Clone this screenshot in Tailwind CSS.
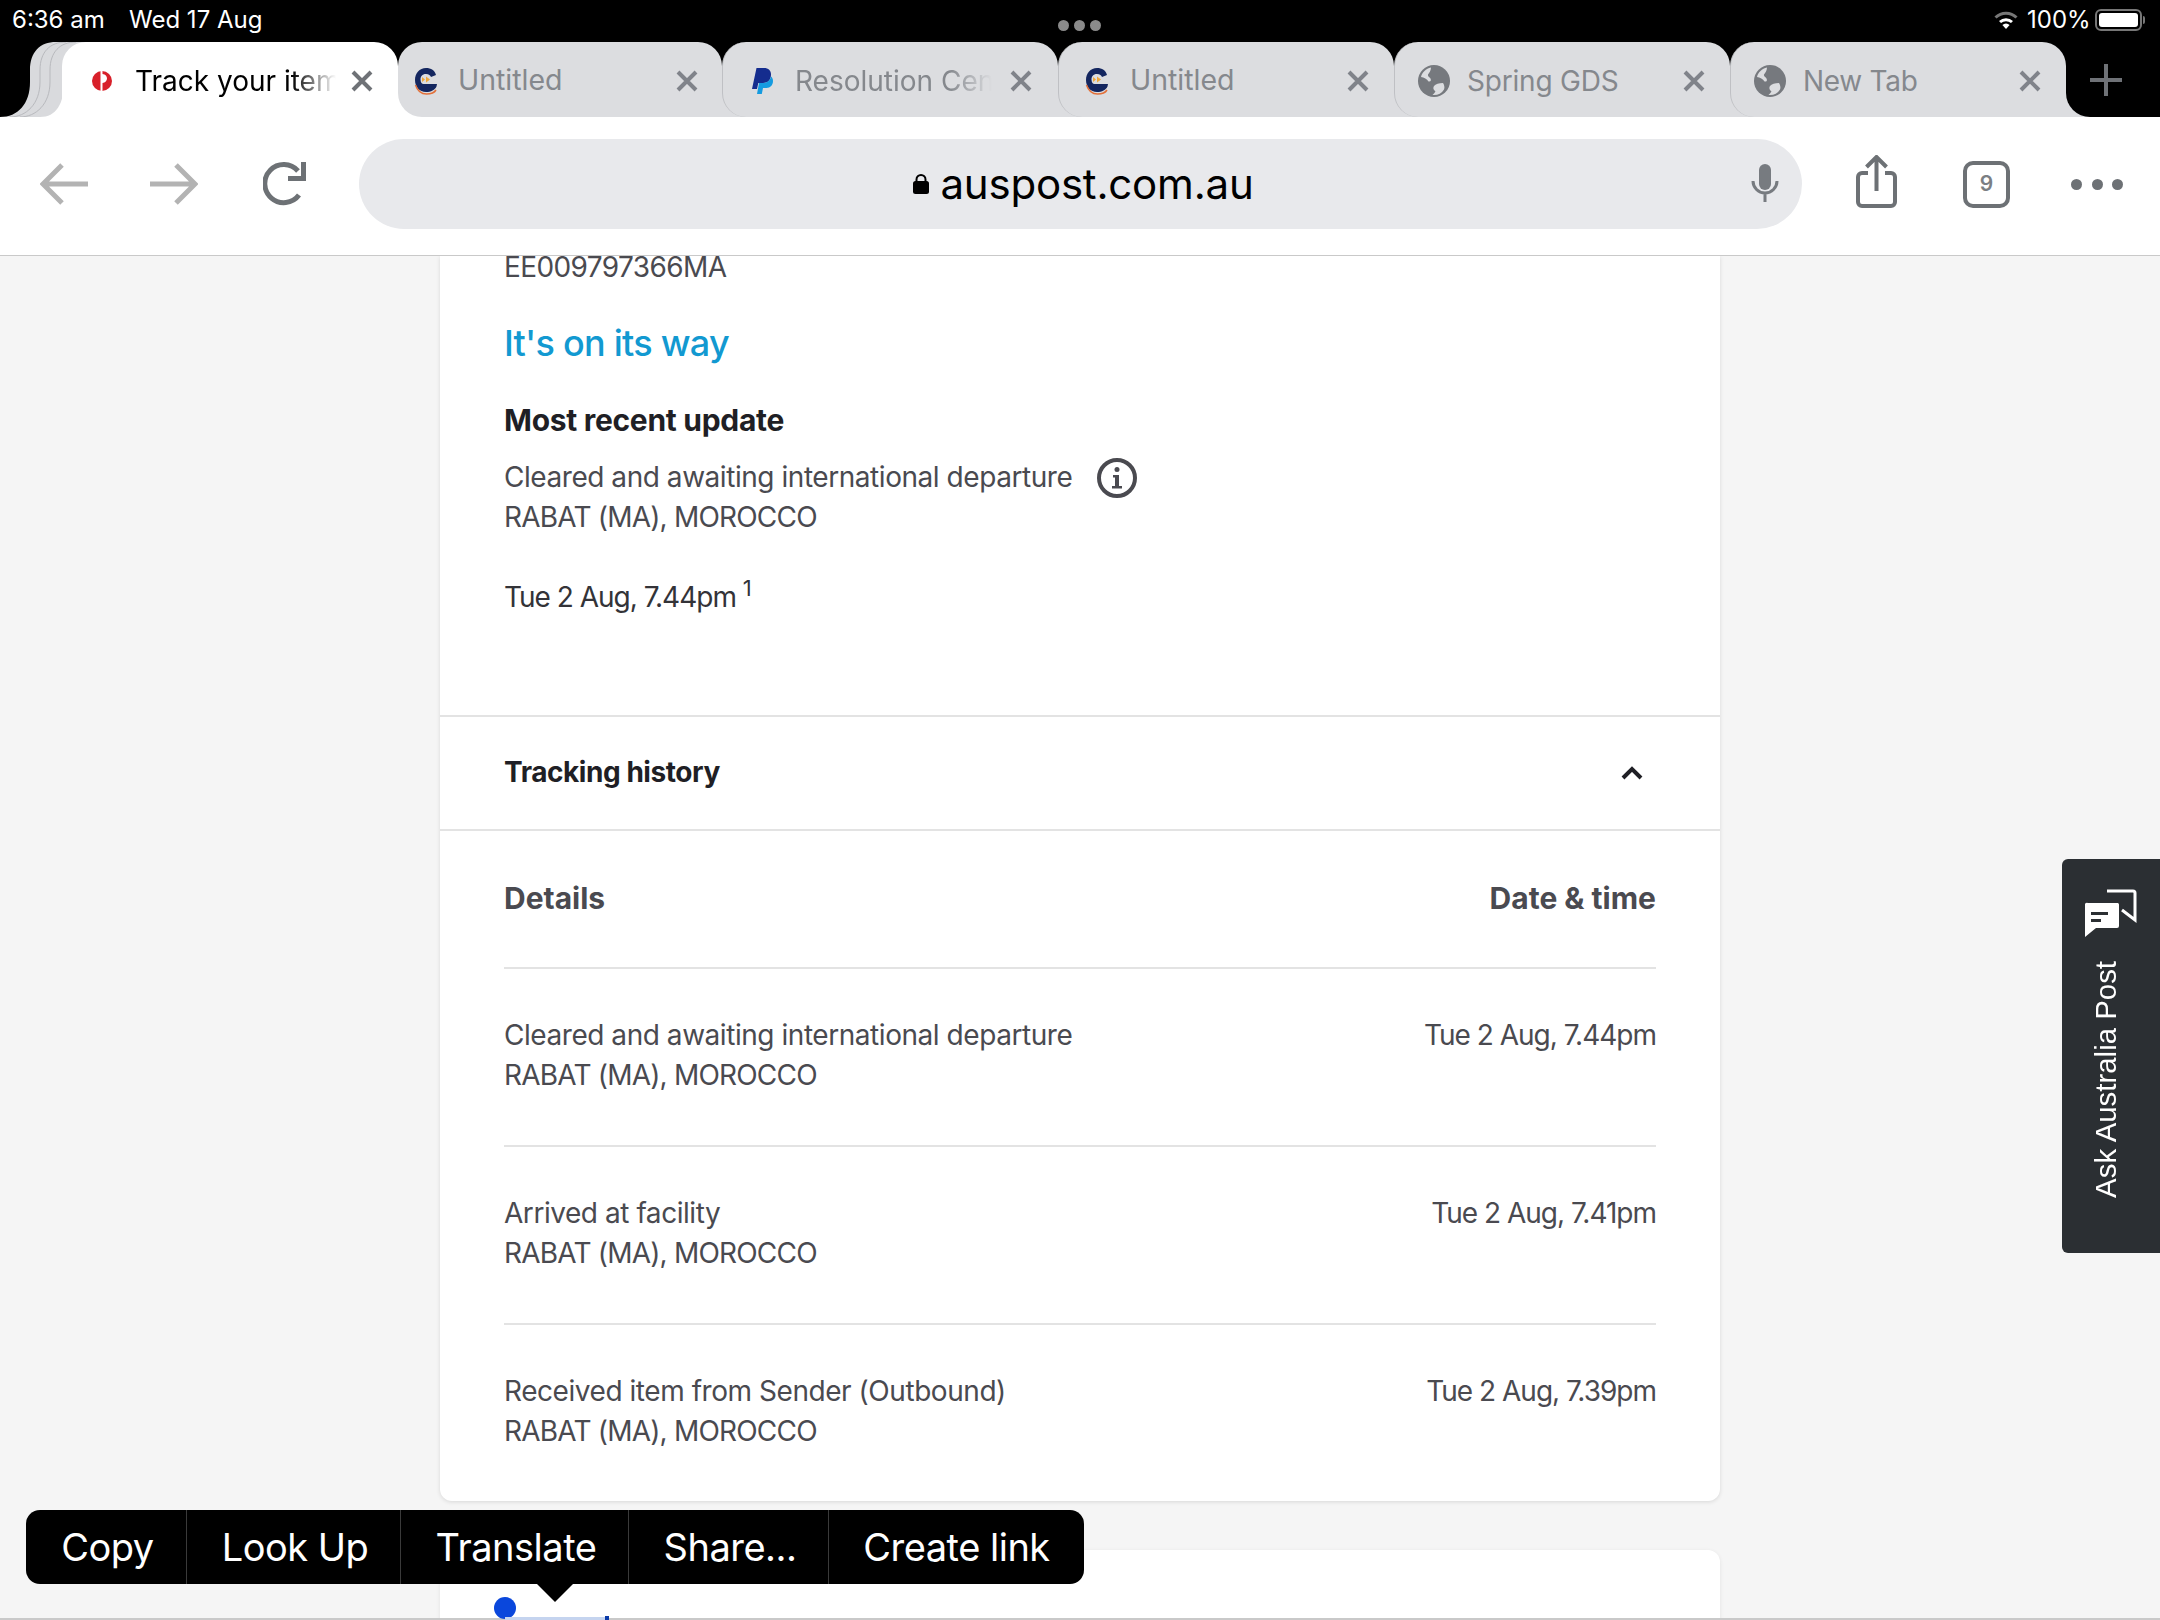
<!DOCTYPE html>
<html lang="en">
  <head>
    <meta charset="UTF-8" />
    <meta name="viewport" content="width=device-width, initial-scale=1.0" />
    <title>Track your item</title>
    <script src="https://cdn.jsdelivr.net/npm/@tailwindcss/browser@4"></script>
  </head>
  <body class="relative w-[2160px] h-[1620px] overflow-hidden bg-[#f5f5f5] font-['Inter',sans-serif] flex flex-col">
    <!-- status bar -->
    <div class="h-[42px] bg-black text-white text-[24px] flex items-center pl-[12px] pr-[12px] pb-[2px] shrink-0">
      <span class="w-[117px]">6:36 am</span>
      <span class="w-[929px]">Wed 17 Aug</span>
      <div class="flex gap-[5px] mt-[10px]">
        <span class="w-[11px] h-[11px] rounded-full bg-[#8a8a8a]"></span>
        <span class="w-[11px] h-[11px] rounded-full bg-[#8a8a8a]"></span>
        <span class="w-[11px] h-[11px] rounded-full bg-[#8a8a8a]"></span>
      </div>
      <svg class="ml-[893px]" width="24" height="20" viewBox="0 0 24 20">
        <path d="M1.5 7.5a15 15 0 0 1 21 0" fill="none" stroke="#777" stroke-width="3" />
        <path d="M6 12a9 9 0 0 1 12 0" fill="none" stroke="#fff" stroke-width="3" />
        <path d="M12 19l-3.6-4a5 5 0 0 1 7.2 0z" fill="#fff" />
      </svg>
      <span class="ml-[9px]">100%</span>
      <div class="ml-[4px] w-[47px] h-[22px] rounded-[6px] border-2 border-[#777] p-[2px]">
        <div class="w-full h-full rounded-[3px] bg-white"></div>
      </div>
      <div class="w-[2px] h-[8px] bg-[#777] rounded-r ml-[1px]"></div>
    </div>

    <!-- tab strip -->
    <div class="h-[75px] bg-black flex shrink-0">
      <svg class="shrink-0" width="86" height="75" viewBox="0 0 86 75">
        <path d="M0 75C18 75 30 62 30 40V28C30 10 40 0 56 0H86V75Z" fill="#d9dadd" />
        <path d="M10 75C26 75 40 62 40 40V28C40 10 50 0 66 0" fill="none" stroke="#b8b9bd" />
        <path d="M20 75C36 75 50 62 50 40V28C50 10 60 0 76 0" fill="none" stroke="#b8b9bd" />
        <path d="M40 75C56 75 64 62 64 40V20H86V75Z" fill="#fff" />
      </svg>

      <div class="relative -ml-[24px] w-[336px] h-[75px] bg-white rounded-t-[24px] flex items-center pl-[30px] pt-[2px]">
        <svg class="shrink-0" width="20" height="20" viewBox="0 0 20 20">
          <circle cx="10" cy="10" r="10" fill="#d8202a" />
          <path d="M8.5 0h2v3c3 .3 4.5 2.4 4.5 4.6s-1.800 4.300-4.500 4.500V20h-2z" fill="#fff" />
        </svg>
        <span class="ml-[23px] w-[201px] overflow-hidden whitespace-nowrap text-[28px] text-black [mask-image:linear-gradient(to_right,#000_78%,transparent)]">Track your item</span>
        <svg class="shrink-0 ml-[15px]" width="22" height="22" viewBox="0 0 22 22"><path d="M2 2l18 18M20 2L2 20" stroke="#6f7277" stroke-width="4" /></svg>
      </div>

      <div class="bg-[linear-gradient(#000_24px,#fff_24px)]">
        <div class="w-[324px] h-[75px] bg-[#dcdde0] rounded-t-[24px] rounded-bl-[24px] flex items-center pl-[16px] pt-[2px]">
          <svg class="shrink-0" width="24" height="28" viewBox="0 0 24 28">
            <path d="M23 17H9.500C8 17 6.500 15.500 6.500 12.500S8 7 12 7c3 0 4.500 1.500 5 3l5-2C21 3.500 17 1 12 1 5.500 1 1 6 1 13s4.500 12 11 12c5 0 9-2 10.500-5.500z" fill="#14265f" />
            <path d="M12 9.500l4 3-4 3zM8 10l3 2.500L8 15z" fill="#f0a83c" />
            <path d="M1.500 18c2 6 6 9 11 9 4 0 8-1.500 9.500-4" fill="none" stroke="#e2703a" stroke-width="1.500" />
          </svg>
          <span class="ml-[20px] text-[28.500px] text-[#85888d] w-[218px]">Untitled</span>
          <svg class="shrink-0" width="22" height="22" viewBox="0 0 22 22"><path d="M2 2l18 18M20 2L2 20" stroke="#80838a" stroke-width="4" /></svg>
        </div>
      </div>

      <div class="flex-1 flex bg-[linear-gradient(#000_24px,#dcdde0_24px)]">
        <div class="w-[336px] h-[75px] bg-[#dcdde0] border-l border-[#bfc0c4] rounded-t-[24px] rounded-bl-[24px] flex items-center pl-[28px] pt-[2px]">
          <svg class="shrink-0" width="22" height="26" viewBox="0 0 22 26">
            <path d="M13 0H5.500L1 21h5l1.300-6H12c5 0 8-3.500 8-8.500C20 2.500 17.500 0 13 0z" fill="#142c8e" />
            <path d="M8 15l-2 11h4.800l1.200-6h3.500c3.800 0 6.500-3 6.500-7 0-2-.7-3.500-2-4.500-.8 4-3.800 6.500-8 6.500z" fill="#159be0" />
          </svg>
          <span class="ml-[22px] w-[197px] overflow-hidden whitespace-nowrap text-[28px] text-[#85888d] [mask-image:linear-gradient(to_right,#000_78%,transparent)]">Resolution Center</span>
          <svg class="shrink-0 ml-[18px]" width="22" height="22" viewBox="0 0 22 22"><path d="M2 2l18 18M20 2L2 20" stroke="#80838a" stroke-width="4" /></svg>
        </div>
        <div class="w-[336px] h-[75px] bg-[#dcdde0] border-l border-[#bfc0c4] rounded-t-[24px] rounded-bl-[24px] flex items-center pl-[26px] pt-[2px]">
          <svg class="shrink-0" width="24" height="28" viewBox="0 0 24 28">
            <path d="M23 17H9.500C8 17 6.500 15.500 6.500 12.500S8 7 12 7c3 0 4.500 1.500 5 3l5-2C21 3.500 17 1 12 1 5.500 1 1 6 1 13s4.500 12 11 12c5 0 9-2 10.500-5.500z" fill="#14265f" />
            <path d="M12 9.500l4 3-4 3zM8 10l3 2.500L8 15z" fill="#f0a83c" />
            <path d="M1.500 18c2 6 6 9 11 9 4 0 8-1.500 9.500-4" fill="none" stroke="#e2703a" stroke-width="1.500" />
          </svg>
          <span class="ml-[21px] text-[28.500px] text-[#85888d] w-[217px]">Untitled</span>
          <svg class="shrink-0" width="22" height="22" viewBox="0 0 22 22"><path d="M2 2l18 18M20 2L2 20" stroke="#80838a" stroke-width="4" /></svg>
        </div>
        <div class="w-[336px] h-[75px] bg-[#dcdde0] border-l border-[#bfc0c4] rounded-t-[24px] rounded-bl-[24px] flex items-center pl-[23px] pt-[2px]">
          <svg class="shrink-0" width="32" height="32" viewBox="0 0 32 32">
            <circle cx="16" cy="16" r="16" fill="#76797e" />
            <path d="M13 2.500C8 3.500 4 7.500 3 12c3 .5 6 2 7.500 4.500 2 .5 3-1 2-3-1-1.500-3-2-2.500-4C11 8 13 6 13 2.500zM25 18c-4 0-7.500 1-9 3-1.500 2.500 0 4 1.500 5.500-1 1.500-2 2.500-3 3.500 5 .5 9-1.500 11.500-5.500 1-2 0-5-1-6.500z" fill="#dcdde0" />
          </svg>
          <span class="ml-[17px] text-[28px] tracking-[-0.2px] text-[#85888d] w-[216px]">Spring GDS</span>
          <svg class="shrink-0" width="22" height="22" viewBox="0 0 22 22"><path d="M2 2l18 18M20 2L2 20" stroke="#80838a" stroke-width="4" /></svg>
        </div>
        <div class="w-[336px] h-[75px] bg-[#dcdde0] border-l border-[#bfc0c4] rounded-t-[24px] rounded-bl-[24px] flex items-center pl-[23px] pt-[2px]">
          <svg class="shrink-0" width="32" height="32" viewBox="0 0 32 32">
            <circle cx="16" cy="16" r="16" fill="#76797e" />
            <path d="M13 2.500C8 3.500 4 7.500 3 12c3 .5 6 2 7.500 4.500 2 .5 3-1 2-3-1-1.500-3-2-2.500-4C11 8 13 6 13 2.500zM25 18c-4 0-7.500 1-9 3-1.500 2.500 0 4 1.500 5.500-1 1.500-2 2.500-3 3.500 5 .5 9-1.500 11.500-5.500 1-2 0-5-1-6.500z" fill="#dcdde0" />
          </svg>
          <span class="ml-[17px] text-[28px] tracking-[-0.3px] text-[#85888d] w-[216px]">New Tab</span>
          <svg class="shrink-0" width="22" height="22" viewBox="0 0 22 22"><path d="M2 2l18 18M20 2L2 20" stroke="#80838a" stroke-width="4" /></svg>
        </div>
        <div class="flex-1 bg-black rounded-bl-[24px] flex items-center pl-[24px]">
          <svg width="32" height="32" viewBox="0 0 32 32"><path d="M16 0v32M0 16h32" stroke="#6f7277" stroke-width="4" /></svg>
        </div>
      </div>
    </div>

    <!-- toolbar -->
    <div class="h-[139px] bg-white border-b border-[#c9c9c9] flex items-center pl-[40px] pb-[4px] shrink-0">
      <svg width="48" height="42" viewBox="0 0 48 42"><path d="M48 21H4M22 2L3 21l19 19" fill="none" stroke="#b3b3b3" stroke-width="5" /></svg>
      <svg class="ml-[62px]" width="48" height="42" viewBox="0 0 48 42"><path d="M0 21h44M26 2l19 19-19 19" fill="none" stroke="#b3b3b3" stroke-width="5" /></svg>
      <svg class="ml-[65px]" width="44" height="44" viewBox="0 0 44 44"><path d="M36 33A19 19 0 1 1 35 9" fill="none" stroke="#6d7175" stroke-width="5" /><path d="M43 0v19H25v-5h13V0z" fill="#6d7175" /></svg>
      <div class="ml-[52px] w-[1443px] h-[90px] rounded-full bg-[#e8e9ec] flex items-center justify-center relative">
        <svg class="mr-[11px] ml-[6px]" width="16" height="20" viewBox="0 0 16 20"><path d="M3.500 8V5.500a4.500 4.500 0 0 1 9 0V8" fill="none" stroke="#000" stroke-width="2" /><rect y="7" width="16" height="13" rx="2.500" fill="#000" /></svg>
        <span class="text-[42px] text-black tracking-[-0.2px] -mt-[2px]">auspost.com.au</span>
        <svg class="absolute right-[23px] top-[25px]" width="28" height="38" viewBox="0 0 28 38"><rect x="8" width="12" height="26" rx="6" fill="#777b80" /><path d="M2 17a12 12 0 0 0 24 0M14 29v9" fill="none" stroke="#777b80" stroke-width="3" /></svg>
      </div>
      <svg class="ml-[54px] -translate-y-[3px]" width="41" height="53" viewBox="0 0 41 53"><path d="M12 18H6a4 4 0 0 0-4 4v25a4 4 0 0 0 4 4h29a4 4 0 0 0 4-4V22a4 4 0 0 0-4-4h-6" fill="none" stroke="#6d7175" stroke-width="4" /><path d="M20.500 36V3M10.500 12l10-10 10 10" fill="none" stroke="#6d7175" stroke-width="4" /></svg>
      <div class="ml-[66px] w-[47px] h-[47px] rounded-[10px] border-[4px] border-[#6d7175] flex items-center justify-center text-[21px] font-semibold text-[#7b7f84]">9</div>
      <div class="ml-[61px] flex gap-[9.500px]">
        <span class="w-[11px] h-[11px] rounded-full bg-[#6d7175]"></span>
        <span class="w-[11px] h-[11px] rounded-full bg-[#6d7175]"></span>
        <span class="w-[11px] h-[11px] rounded-full bg-[#6d7175]"></span>
      </div>
    </div>

    <!-- page -->
    <main class="flex-1 overflow-hidden">
      <div class="w-[1280px] ml-[440px] bg-white rounded-b-[12px] shadow-[0_1px_4px_rgba(0,0,0,0.12)]">
        <div class="px-[64px] pb-[98px] text-[28px] leading-[40px] tracking-[-0.45px] text-[#4a4a50]">
          <p class="leading-[22px] tracking-[-0.6px]">EE009797366MA</p>
          <h2 class="mt-[41px] text-[36px] leading-[48px] tracking-[-0.75px] font-medium text-[#1299d1]">It's on its way</h2>
          <h3 class="mt-[33px] text-[30px] tracking-[-0.3px] font-bold text-[#1f1f25]">Most recent update</h3>
          <div class="mt-[17px] flex items-center gap-[25px]">
            <span>Cleared and awaiting international departure</span>
            <svg class="translate-y-[1px]" width="40" height="40" viewBox="0 0 40 40"><circle cx="20" cy="20" r="18" fill="none" stroke="#4a4a50" stroke-width="4" /><circle cx="20" cy="11.500" r="2.500" fill="#4a4a50" /><path d="M16 17h6v11h3v2.500H15V28h3v-8.500h-2z" fill="#4a4a50" /></svg>
          </div>
          <p class="tracking-[-0.8px]">RABAT (MA), MOROCCO</p>
          <p class="mt-[40px] text-[#333338] tracking-[-1px]">Tue 2 Aug, 7.44pm <sup class="text-[22px] -top-[11px]">1</sup></p>
        </div>

        <div class="h-[116px] border-y-2 border-[#e3e3e3] px-[64px] flex items-center justify-between">
          <span class="text-[28px] tracking-[-0.45px] font-bold text-[#1f1f25] mb-[2px]">Tracking history</span>
          <svg class="mr-[13px]" width="22" height="14" viewBox="0 0 22 14"><path d="M2 12l9-9 9 9" fill="none" stroke="#1f1f25" stroke-width="4" /></svg>
        </div>

        <div class="px-[64px] text-[28px] leading-[40px] tracking-[-0.45px] text-[#4a4a50]">
          <div class="pt-[47px] pb-[49px] border-b-2 border-[#e3e3e3] flex justify-between text-[30px] tracking-normal font-bold">
            <span>Details</span>
            <span>Date &amp; time</span>
          </div>
          <div class="pt-[46px] pb-[50px] border-b-2 border-[#e3e3e3] flex justify-between">
            <div>
              <p>Cleared and awaiting international departure</p>
              <p class="tracking-[-0.8px]">RABAT (MA), MOROCCO</p>
            </div>
            <span class="tracking-[-1px]">Tue 2 Aug, 7.44pm</span>
          </div>
          <div class="pt-[46px] pb-[50px] border-b-2 border-[#e3e3e3] flex justify-between">
            <div>
              <p>Arrived at facility</p>
              <p class="tracking-[-0.8px]">RABAT (MA), MOROCCO</p>
            </div>
            <span class="tracking-[-1px]">Tue 2 Aug, 7.41pm</span>
          </div>
          <div class="pt-[46px] pb-[50px] flex justify-between">
            <div>
              <p>Received item from Sender (Outbound)</p>
              <p class="tracking-[-0.8px]">RABAT (MA), MOROCCO</p>
            </div>
            <span class="tracking-[-1px]">Tue 2 Aug, 7.39pm</span>
          </div>
        </div>
      </div>

      <div class="w-[1280px] h-[200px] ml-[440px] mt-[49px] bg-white rounded-t-[12px] shadow-[0_1px_4px_rgba(0,0,0,0.08)]"></div>
    </main>

    <!-- Ask Australia Post tab -->
    <div class="absolute left-[2062px] top-[859px] w-[98px] h-[394px] bg-[#2b2f33] rounded-l-[6px] flex flex-col items-center pt-[30px]">
      <svg width="52" height="48" viewBox="0 0 52 48">
        <path d="M22 2h26a2 2 0 0 1 2 2v27L37 21" fill="none" stroke="#fff" stroke-width="3" />
        <path d="M3 14h30a2 2 0 0 1 1 2v21a2 2 0 0 1-2 2H11L0 48V16a2 2 0 0 1 3-2z" fill="#fff" />
        <path d="M6 23h17v3H6zM6 30h10v3H6z" fill="#2b2f33" />
      </svg>
      <span class="mt-[24px] -ml-[10px] [writing-mode:vertical-rl] rotate-180 font-['Liberation_Sans',sans-serif] text-[29.400px] leading-[32px] text-white whitespace-nowrap">Ask Australia Post</span>
    </div>

    <!-- text selection -->
    <div class="absolute left-0 bottom-0 w-full h-[2px] bg-[#c9c9c9]"></div>
    <div class="absolute left-[494px] top-[1597px] w-[22px] h-[22px] rounded-full bg-[#0a47dc]"></div>
    <div class="absolute left-[505px] top-[1617px] w-[102px] h-[3px] bg-[#c5d4ef]"></div>
    <div class="absolute left-[605px] top-[1616px] w-[4px] h-[4px] bg-[#0a3aa8]"></div>

    <!-- callout menu -->
    <div class="absolute left-[26px] top-[1510px] h-[74px] rounded-[14px] bg-black text-white text-[38px] tracking-[-0.5px] flex items-center divide-x divide-[#3a3a3a]">
      <span class="w-[161px] h-full flex items-center justify-center pl-[3px]">Copy</span>
      <span class="w-[214px] h-full flex items-center justify-center pl-[3px]">Look Up</span>
      <span class="w-[228px] h-full flex items-center justify-center pl-[3px]">Translate</span>
      <span class="w-[200px] h-full flex items-center justify-center pl-[3px]">Share...</span>
      <span class="w-[255px] h-full flex items-center justify-center">Create link</span>
    </div>
    <svg class="absolute left-[537px] top-[1584px]" width="36" height="18" viewBox="0 0 36 18"><path d="M0 0h36L18 18z" fill="#000" /></svg>
  </body>
</html>
